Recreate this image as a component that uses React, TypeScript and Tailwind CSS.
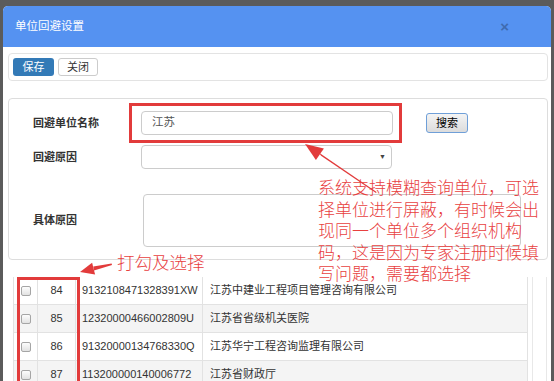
import React from "react";

const rows = [
  { n: "84", code: "9132108471328391XW", name: "江苏中建业工程项目管理咨询有限公司" },
  { n: "85", code: "12320000466002809U", name: "江苏省省级机关医院" },
  { n: "86", code: "91320000134768330Q", name: "江苏华宁工程咨询监理有限公司" },
  { n: "87", code: "113200000140006772", name: "江苏省财政厅" },
];

const ui = { fontFamily: '"Liberation Sans", "Noto Sans CJK SC", sans-serif' };
const anno = { fontFamily: '"Noto Sans CJK SC", sans-serif' };

function Checkbox() {
  return (
    <div className="h-[10px] w-[10px] rounded-[2px] border border-[#a5a5a5] bg-gradient-to-b from-[#fdfdfd] to-[#e2e2e2]" />
  );
}

export default function App() {
  return (
    <div className="relative h-[381px] w-[554px] overflow-hidden bg-[#5b5b5b] px-[3px] pt-[6px]" style={ui}>
      <div className="flex h-[420px] flex-col rounded-t-[5px] bg-white">
        {/* header */}
        <div className="flex h-[41px] items-center justify-between rounded-t-[5px] bg-[#5592f1] pl-[12px] pr-[42px]">
          <span className="text-[11.5px] text-white">单位回避设置</span>
          <span className="text-[15px] font-bold leading-none text-[#3f6bb0]">×</span>
        </div>
        <div className="flex flex-col pl-[5px] pr-[3px] pt-[6px]">
          {/* toolbar */}
          <div className="flex h-[28px] items-center gap-[4px] rounded-[4px] border border-[#e3e3e3] pl-[4px]">
            <div className="flex h-[18px] w-[41px] items-center justify-center rounded-[3px] bg-[#337ab7] text-[11px] text-white">
              保存
            </div>
            <div className="flex h-[18px] w-[40px] items-center justify-center rounded-[3px] border border-[#cccccc] bg-white text-[11px] text-[#333]">
              关闭
            </div>
          </div>
          {/* form panel */}
          <div className="mt-[17px] h-[162px] rounded-[4px] border border-[#dddddd] pt-[12px]">
            <div className="flex h-[24px] items-center">
              <div className="w-[132px] pl-[24px] text-[11px] font-bold text-[#333]">回避单位名称</div>
              <div className="flex h-[24px] w-[252px] items-center rounded-[4px] border border-[#cccccc] pl-[10px] text-[11.5px] text-[#555]">
                江苏
              </div>
              <div className="ml-[33px] flex h-[20px] w-[42px] items-center justify-center rounded-[3px] border border-[#6f9fd8] bg-gradient-to-b from-[#f4f4f4] to-[#dcdcdc] text-[11px] text-black">
                搜索
              </div>
            </div>
            <div className="mt-[10px] flex h-[24px] items-center">
              <div className="w-[132px] pl-[24px] text-[11px] font-bold text-[#333]">回避原因</div>
              <div className="flex h-[24px] w-[251px] items-center justify-end rounded-[4px] border border-[#cccccc] pr-[5px] text-[7px] text-[#444]">
                ▼
              </div>
            </div>
            <div className="mt-[25px] flex h-[53px] items-center">
              <div className="w-[134px] pl-[24px] text-[11px] font-bold text-[#333]">具体原因</div>
              <div className="h-[53px] w-[378px] rounded-[4px] border border-[#cccccc]" />
            </div>
          </div>
          {/* table */}
          <div className="mt-[17px] flex pl-[5px]">
            <div className="w-[515px] border-x border-[#e2e2e2]">
              {rows.map((r, i) => (
                <div
                  key={r.n}
                  className={`flex h-[28px] border-b border-[#e2e2e2] text-[11px] text-[#333] ${
                    i % 2 === 1 ? "bg-[#f4f4f4]" : "bg-white"
                  }`}
                >
                  <div className="flex w-[24px] items-center justify-center border-r border-[#e2e2e2]">
                    <Checkbox />
                  </div>
                  <div className="flex w-[38px] items-center justify-center border-r border-[#e2e2e2]">{r.n}</div>
                  <div className="flex w-[127px] items-center border-r border-[#e2e2e2] pl-[6px]">{r.code}</div>
                  <div className="flex flex-1 items-center pl-[7px]">{r.name}</div>
                </div>
              ))}
            </div>
            <div className="ml-[4px] h-[120px] w-[15px] border-x border-[#e8e8e8]" />
          </div>
        </div>
      </div>

      {/* annotations */}
      <div className="absolute left-[129px] top-[103px] h-[40px] w-[273px] border-[3px] border-[#e23b3b]" />
      <div className="absolute left-[17px] top-[277px] h-[110px] w-[63px] border-[3px] border-[#e23b3b]" />
      <svg className="absolute left-0 top-0" width="554" height="381" viewBox="0 0 554 381">
        <polygon points="305,144 323.9,148.4 315.9,160" fill="#e23b3b" />
        <polygon points="318.8,152.5 321,155.8 376,193 376.6,192" fill="#e23b3b" />
        <polygon points="80,272 92.1,262.8 95.1,274.4" fill="#e23b3b" />
        <polygon points="93.3,266.6 94,270.4 112,265 111.6,263.4" fill="#e23b3b" />
      </svg>
      <div
        className="absolute left-[318px] top-[176px] text-[17px] font-light leading-[21.5px] text-[#e8413f]"
        style={anno}
      >
        系统支持模糊查询单位，可选
        <br />
        择单位进行屏蔽，有时候会出
        <br />
        现同一个单位多个组织机构
        <br />
        码，这是因为专家注册时候填
        <br />
        写问题，需要都选择
      </div>
      <div
        className="absolute left-[117px] top-[251px] text-[17.5px] font-light leading-[22px] text-[#e8413f]"
        style={anno}
      >
        打勾及选择
      </div>
    </div>
  );
}
